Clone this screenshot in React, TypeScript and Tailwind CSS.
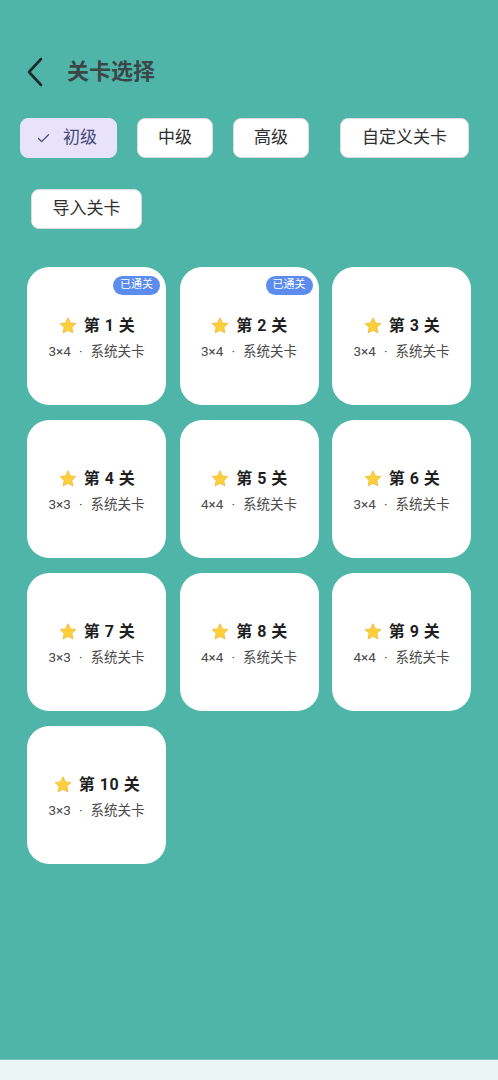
import { Check } from "lucide-react";

const levels = [
    { n: 1, size: "3×4", done: true },
    { n: 2, size: "3×4", done: true },
    { n: 3, size: "3×4", done: false },
    { n: 4, size: "3×3", done: false },
    { n: 5, size: "4×4", done: false },
    { n: 6, size: "3×4", done: false },
    { n: 7, size: "3×3", done: false },
    { n: 8, size: "4×4", done: false },
    { n: 9, size: "4×4", done: false },
    { n: 10, size: "3×3", done: false },
];

const Star = () => (
    <svg width="20" height="20" viewBox="0 0 24 24" className="shrink-0">
        <path
            d="M12 2.2l2.9 6.1 6.6.8-4.9 4.6 1.3 6.6L12 17.1l-5.9 3.2 1.3-6.6-4.9-4.6 6.6-.8z"
            fill="#fcd03a"
            stroke="#f4b73a"
            strokeWidth="1"
            strokeLinejoin="round"
        />
    </svg>
);

const Chip = ({ label, selected = false, className = "" }: { label: string; selected?: boolean; className?: string }) => (
    <div
        className={`h-10 flex items-center justify-center rounded-lg border text-[17px] ${
            selected ? "bg-[#e8e3fa] border-[#e8e3fa] text-[#47497a] pl-2 pr-3" : "bg-white border-[#dcdcdc] text-[#2e2e2e] px-4"
        } ${className}`}
    >
        {selected && <Check size={15} strokeWidth={2} className="mr-[12px] text-[#47497a]" />}
        {label}
    </div>
);

const App = () => {
    return (
        <div className="h-[1080px] flex flex-col bg-[#4fb5a9]" style={{ fontFamily: 'Roboto, "Noto Sans CJK SC", sans-serif' }}>
            <div className="flex-1">
                {/* Header */}
                <div className="flex items-center h-[28px] mt-[58px] pl-[25px]">
                    <svg width="22" height="30" viewBox="0 0 22 30" className="shrink-0">
                        <path d="M16 2 L4 15 L16 28" fill="none" stroke="#1d2b2a" strokeWidth="2.6" strokeLinecap="round" strokeLinejoin="round" />
                    </svg>
                    <h1 className="ml-[20px] text-[22px] font-bold text-[#3b4648] leading-none">关卡选择</h1>
                </div>

                {/* Filter chips */}
                <div className="flex items-center mt-[32px] pl-[20px]">
                    <Chip label="初级" selected className="w-[97px]" />
                    <Chip label="中级" className="ml-[20px] w-[76px]" />
                    <Chip label="高级" className="ml-[20px] w-[76px]" />
                    <Chip label="自定义关卡" className="ml-[31px] w-[129px]" />
                </div>
                <div className="flex mt-[31px] pl-[31px]">
                    <Chip label="导入关卡" className="w-[111px]" />
                </div>

                {/* Levels grid */}
                <div className="grid grid-cols-[139px_139px_139px] gap-x-[13.5px] gap-y-[15px] mt-[38px] pl-[27px]">
                    {levels.map((item) => (
                        <div key={item.n} className="relative h-[138px] bg-white rounded-[22px] flex flex-col items-center justify-center pt-[3px]">
                            {item.done && (
                                <span className="absolute top-[9px] right-[6px] h-[19px] px-[7px] flex items-center rounded-full bg-[#5b8cee] text-white text-[11px]">
                                    已通关
                                </span>
                            )}
                            <div className="flex items-center gap-[6px]">
                                <Star />
                                <span className="text-[16px] font-bold text-[#1f1f1f] tracking-[0.5px]">第 {item.n} 关</span>
                            </div>
                            <div className="mt-[3px] flex items-center text-[13.5px] text-[#4a4a4a]">
                                <span>{item.size}</span>
                                <span className="mx-[8px]">·</span>
                                <span>系统关卡</span>
                            </div>
                        </div>
                    ))}
                </div>
            </div>

            {/* Bottom bar */}
            <div className="h-[21px] bg-[#ecf5f6] border-t border-[#7cc3bb]" />
        </div>
    );
};

export default App;
